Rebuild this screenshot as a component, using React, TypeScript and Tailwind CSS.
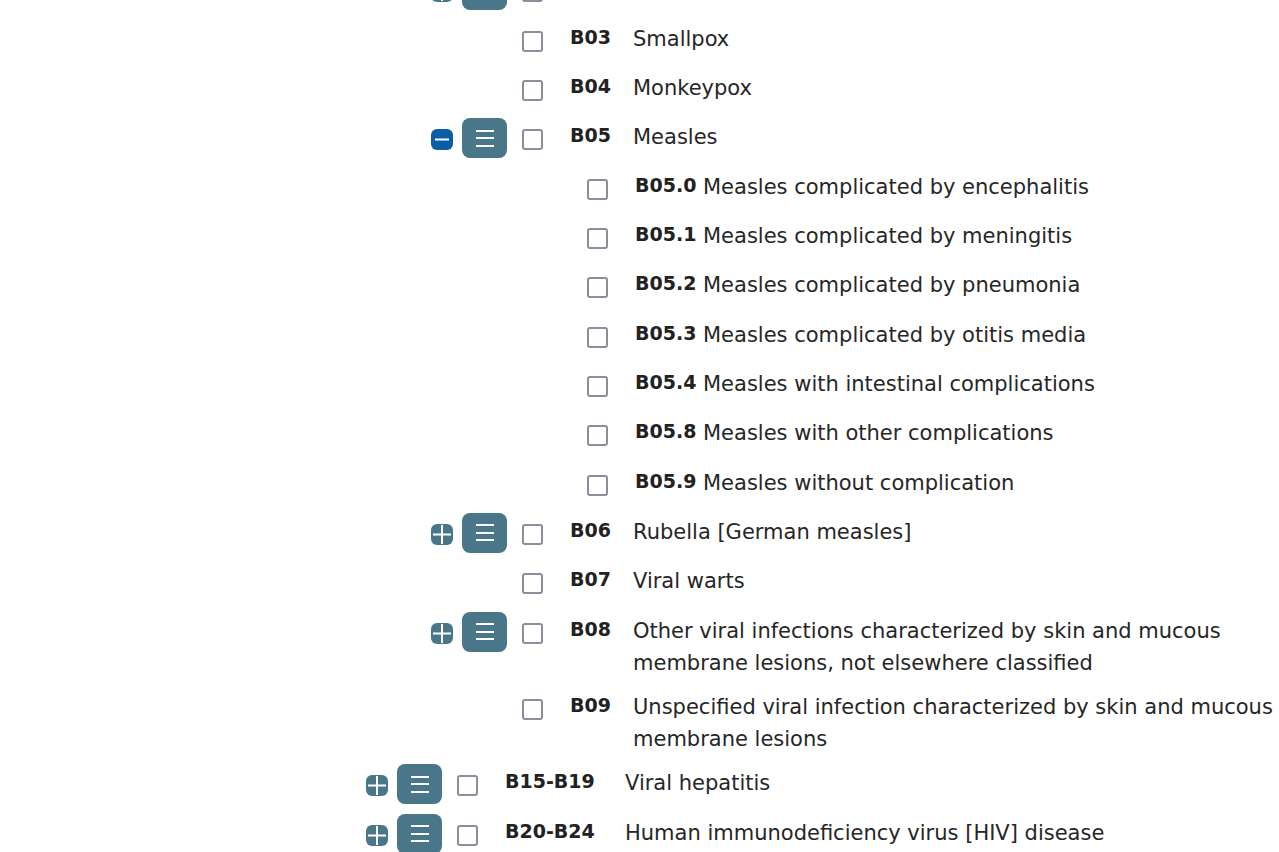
import React from 'react';

type Node = {
  code: string;
  desc: string;
  expand?: 'plus' | 'minus';
  children?: Node[];
};

const tree: Node[] = [
  {
    code: 'B00-B09',
    desc: 'Viral infections characterized by skin and mucous membrane lesions',
    expand: 'minus',
    children: [
      { code: 'B02', desc: 'Varicella [chickenpox]', expand: 'plus' },
      { code: 'B03', desc: 'Smallpox' },
      { code: 'B04', desc: 'Monkeypox' },
      {
        code: 'B05',
        desc: 'Measles',
        expand: 'minus',
        children: [
          { code: 'B05.0', desc: 'Measles complicated by encephalitis' },
          { code: 'B05.1', desc: 'Measles complicated by meningitis' },
          { code: 'B05.2', desc: 'Measles complicated by pneumonia' },
          { code: 'B05.3', desc: 'Measles complicated by otitis media' },
          { code: 'B05.4', desc: 'Measles with intestinal complications' },
          { code: 'B05.8', desc: 'Measles with other complications' },
          { code: 'B05.9', desc: 'Measles without complication' },
        ],
      },
      { code: 'B06', desc: 'Rubella [German measles]', expand: 'plus' },
      { code: 'B07', desc: 'Viral warts' },
      {
        code: 'B08',
        desc: 'Other viral infections characterized by skin and mucous membrane lesions, not elsewhere classified',
        expand: 'plus',
      },
      { code: 'B09', desc: 'Unspecified viral infection characterized by skin and mucous membrane lesions' },
    ],
  },
  { code: 'B15-B19', desc: 'Viral hepatitis', expand: 'plus' },
  { code: 'B20-B24', desc: 'Human immunodeficiency virus [HIV] disease', expand: 'plus' },
];

const codeWidth = ['w-[120px]', 'w-[63px]', 'w-[68px]'];

function ExpandIcon({ kind }: { kind: 'plus' | 'minus' }) {
  const fill = kind === 'minus' ? '#0b5ea5' : '#4a7689';
  return (
    <svg width="22" height="21" viewBox="0 0 22 21" className="mt-[11px] shrink-0">
      <rect x="0" y="0" width="22" height="21" rx="6" fill={fill} />
      {kind === 'plus' ? (
        <>
          <rect x="2" y="9.5" width="18" height="2" fill="#fff" />
          <rect x="10" y="1" width="2" height="19" fill="#fff" />
        </>
      ) : (
        <rect x="4" y="9.5" width="14" height="2" fill="#fff" />
      )}
    </svg>
  );
}

function MenuButton() {
  return (
    <button className="ml-[9px] w-[45px] h-10 shrink-0 rounded-lg bg-[#4a7689] flex flex-col items-center justify-center gap-[5.5px]">
      <span className="block w-[18px] h-[2px] bg-white" />
      <span className="block w-[18px] h-[2px] bg-white" />
      <span className="block w-[18px] h-[2px] bg-white" />
    </button>
  );
}

function Row({ node, level }: { node: Node; level: number }) {
  return (
    <div>
      <div className="flex items-start mb-[9.33px]">
        {node.expand ? (
          <>
            <ExpandIcon kind={node.expand} />
            <MenuButton />
          </>
        ) : (
          <div className="w-[76px] h-10 shrink-0" />
        )}
        <span className="ml-[15px] mt-[11px] w-[21px] h-[21px] shrink-0 rounded-[3px] border-2 border-[#8f8b9a] bg-white" />
        <span className={`ml-[27px] pt-[1px] shrink-0 ${codeWidth[level]} text-[19px] leading-[32px] font-bold text-[#222]`}>
          {node.code}
        </span>
        <span className="flex-1 pt-[3px] text-[21px] leading-[32px] text-[#262626]">{node.desc}</span>
      </div>
      {node.children && node.expand === 'minus' && (
        <div className="pl-[65px]">
          {node.children.map((c) => (
            <Row key={c.code} node={c} level={level + 1} />
          ))}
        </div>
      )}
    </div>
  );
}

export default function App() {
  return (
    <div
      className="w-[1279px] h-[852px] overflow-hidden bg-white"
      style={{ fontFamily: '"DejaVu Sans", Verdana, sans-serif' }}
    >
      <div className="pl-[366px] pr-[1px] mt-[-106px]">
        {tree.map((n) => (
          <Row key={n.code} node={n} level={0} />
        ))}
      </div>
    </div>
  );
}
